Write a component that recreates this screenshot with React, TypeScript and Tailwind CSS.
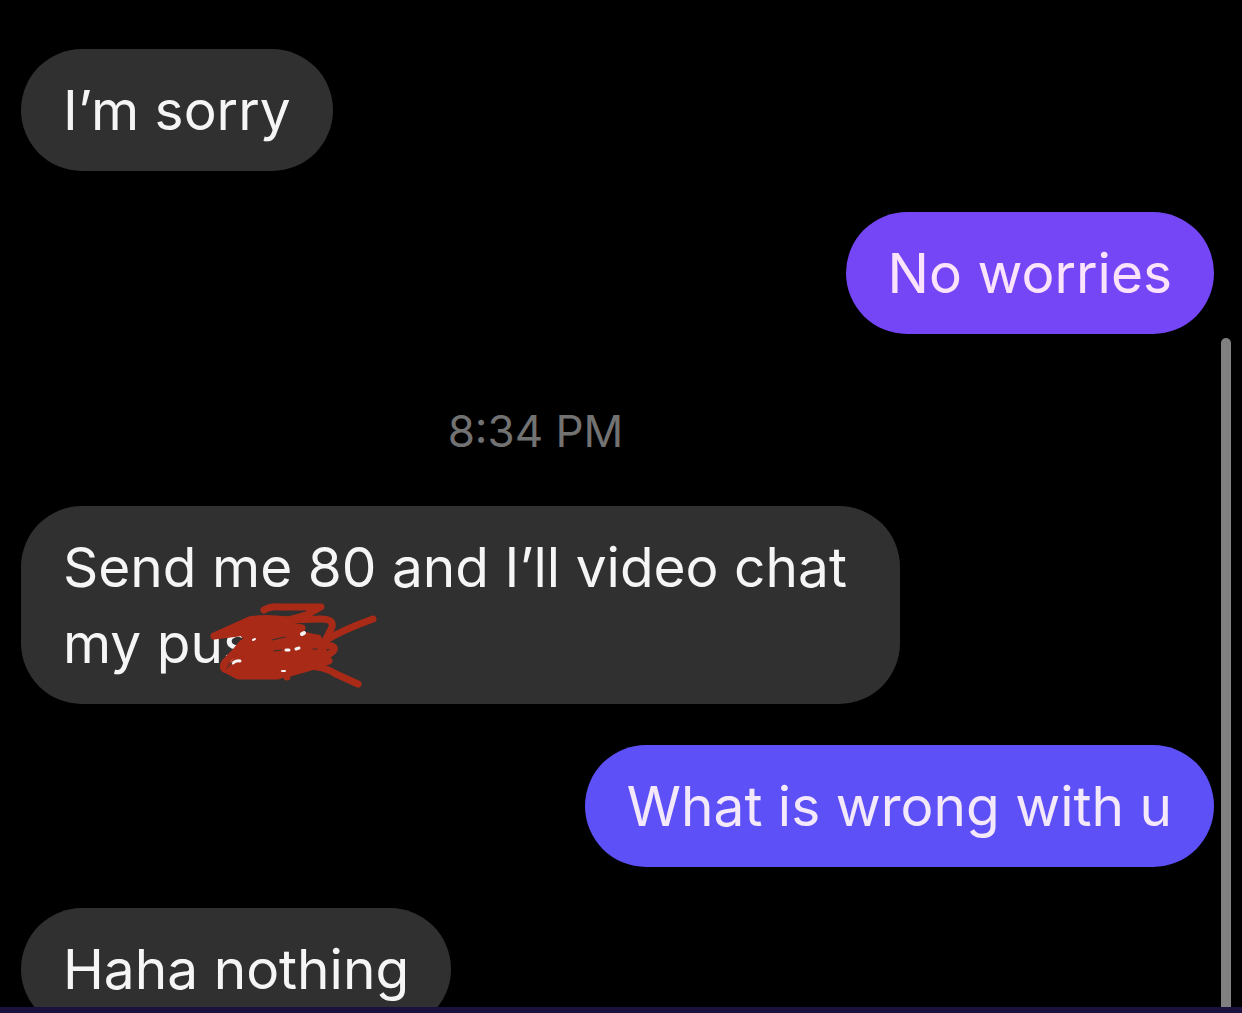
import clsx from "clsx";
import type { ReactNode } from "react";

function Scribble() {
  return (
    <svg
      className="absolute top-[84px] left-[169px] h-[110px] w-[200px]"
      viewBox="0 0 200 110"
      fill="none"
      stroke="#a92b17"
      strokeWidth="7"
      strokeLinecap="round"
      strokeLinejoin="round"
      aria-hidden="true"
    >
      {/* loose ends */}
      <path d="M74 20Q80 16 90 17H131L116 25L98 30L128 29Q144 28 142 37L135 51Q150 41 183 29" />
      <path d="M24 46L60 30Q74 27 98 30M24 46L48 43L88 34" />
      <path d="M116 76Q134 76 146 84L168 94" />
      <path d="M128 48Q131 56 142 56Q148 59 138 65L130 69L139 71L118 78L97 84V87" />
      <path d="M54 51Q46 62 35 72Q31 79 37 80L48 86H88L118 76" />
      {/* dense middle */}
      <path
        d="M28 45L60 30L98 30L94 35L112 38L108 44L126 48L129 52L128 58L134 62L128 69L135 72L112 78L88 85H50L40 78L53 62L58 50L52 42Z"
        fill="#a92b17"
      />
      {/* letter specks showing through */}
      <g stroke="#f5f5f5" strokeWidth="2">
        <path d="M112 44L114 43" strokeWidth="4" />
        <path d="M96 60H99M106 59L109 58" strokeWidth="3" />
        <path d="M63 50L65 49M92 81H95" />
        <path d="M43 73Q46 70 50 71" strokeWidth="3" />
      </g>
      <g stroke="#303030" strokeWidth="1">
        <path d="M51 50L53 48M82 50L95 47M84 61L92 60M123 59H127M37 78L42 73" />
      </g>
    </svg>
  );
}

type BubbleProps = {
  from: "them" | "me";
  tone?: string;
  children: ReactNode;
};

function Bubble({ from, tone = "bg-[#303030] text-[#f5f5f5]", children }: BubbleProps) {
  return (
    <li
      className={clsx(
        "relative w-fit max-w-[879px] rounded-[61px] px-[42px] py-[23px] text-[55px] leading-[76px]",
        from === "me" ? "self-end" : "self-start",
        tone
      )}
    >
      {children}
    </li>
  );
}

export default function App() {
  return (
    <div className="flex h-screen flex-col overflow-hidden bg-black font-['Inter',sans-serif]">
      <main className="flex min-h-0 flex-1 overflow-hidden">
        <ol className="flex flex-1 flex-col gap-[41px] pt-[49px] pr-[7px] pl-[21px]">
          <Bubble from="them">I’m sorry</Bubble>
          <Bubble from="me" tone="bg-[#7546f6] text-[#fbe4fb]">No worries</Bubble>
          <li className="flex justify-center pt-[22px] pr-[164px] text-[44px] leading-[68px] text-[#727272]">
            <time>8:34 PM</time>
          </li>
          <Bubble from="them">
            Send me 80 and I’ll video chat my pus
            <Scribble />
          </Bubble>
          <Bubble from="me" tone="bg-[#5d50f7] text-[#f3e9fb]">What is wrong with u</Bubble>
          <Bubble from="them">Haha nothing</Bubble>
        </ol>
        {/* scroll thumb */}
        <div className="mt-[338px] mr-[11px] w-[10px] shrink-0 rounded-t-full bg-[#808080]" />
      </main>
      <div className="h-[6px] shrink-0 bg-[#19123f]" />
    </div>
  );
}
